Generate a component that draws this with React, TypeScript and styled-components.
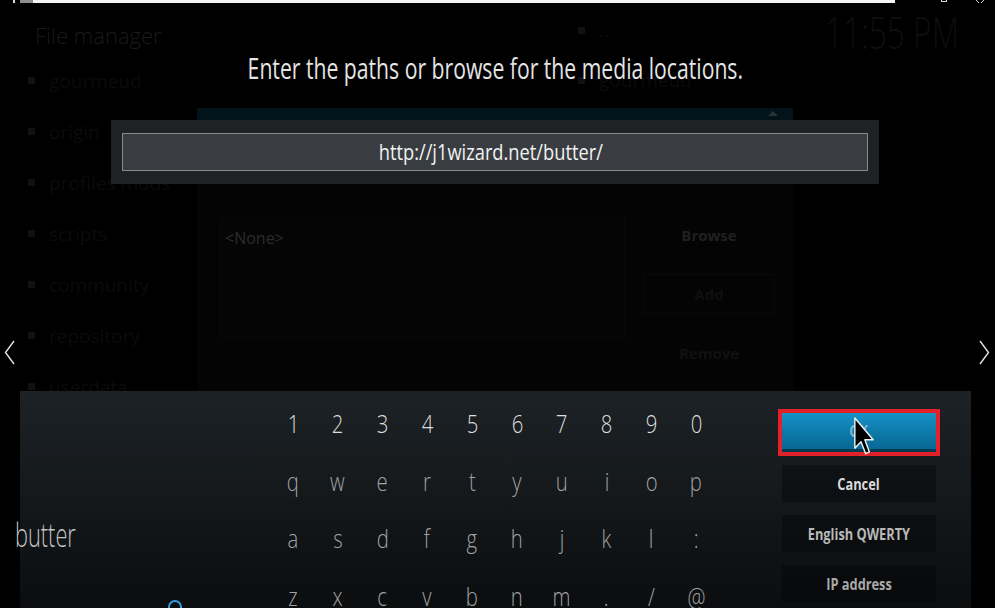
import styled, { createGlobalStyle } from "styled-components";

const GlobalStyle = createGlobalStyle`
  html, body {
    margin: 0;
    padding: 0;
    background: #000;
  }
  body {
    font-family: "Open Sans", "Noto Sans", sans-serif;
  }
  * {
    box-sizing: border-box;
  }
`;

const sideItems = ["gourmeud", "origin", "profiles mods", "scripts", "community", "repository", "userdata"];
const peerItems = ["..", "gourmeud"];

const keyRows = [
  ["1", "2", "3", "4", "5", "6", "7", "8", "9", "0"],
  ["q", "w", "e", "r", "t", "y", "u", "i", "o", "p"],
  ["a", "s", "d", "f", "g", "h", "j", "k", "l", ":"],
  ["z", "x", "c", "v", "b", "n", "m", ".", "/", "@"],
];

const App = () => {
  return (
    <>
      <GlobalStyle />
      <Screen>
        <Backdrop>
          <TopStrip>
            <Tick />
            <GreyBit />
            <WhiteBar />
            <WinMax />
            <WinClose width="8" height="3" viewBox="0 0 8 3">
              <path d="M0 0 L3 3 M8 0 L5 3" stroke="#dcdcdc" strokeWidth="1" fill="none" />
            </WinClose>
          </TopStrip>
          <WindowRow>
            <LeftCol>
              <FileTitle>File manager</FileTitle>
              <SideList>
                {sideItems.map((name) => (
                  <SideItem key={name}>
                    <Bullet />
                    <SideText>{name}</SideText>
                  </SideItem>
                ))}
              </SideList>
            </LeftCol>
            <MidCol>
              <PeerList>
                {peerItems.map((name) => (
                  <PeerItem key={name}>
                    <Bullet />
                    <SideText>{name}</SideText>
                  </PeerItem>
                ))}
              </PeerList>
              <DimDialog>
                <DialogBand>
                  <ScrollUp />
                </DialogBand>
                <DialogBody>
                  <ListBox>&lt;None&gt;</ListBox>
                  <DimButtons>
                    <DimButton $color="#202020">Browse</DimButton>
                    <DimButton $color="#0f0f0f" $framed>
                      Add
                    </DimButton>
                    <DimButton $color="#111111">Remove</DimButton>
                  </DimButtons>
                </DialogBody>
              </DimDialog>
            </MidCol>
            <RightCol>
              <Clock>11:55 PM</Clock>
            </RightCol>
          </WindowRow>
        </Backdrop>

        <Overlay>
          <Title>
            <Narrow $scale={0.73}>Enter the paths or browse for the media locations.</Narrow>
          </Title>
          <UrlPanel>
            <UrlField>
              <Narrow $scale={0.87}>http://j1wizard.net/butter/</Narrow>
            </UrlField>
          </UrlPanel>

          <Keyboard>
            <InputArea>
              <Typed>butter</Typed>
            </InputArea>
            <KeyGrid>
              {keyRows.map((row, r) =>
                row.map((k) => (
                  <Key key={`${r}-${k}`} $color={r === 0 ? "#dedede" : "#a2a2a2"}>
                    <Narrow $scale={0.78}>{k}</Narrow>
                  </Key>
                ))
              )}
            </KeyGrid>
            <ActionCol>
              <OkButton>
                <Narrow $scale={0.8}>OK</Narrow>
                <Pointer width="20" height="38" viewBox="0 0 12 20" preserveAspectRatio="none">
                  <path
                    d="M0.5 0.5 L0.5 16.5 L4.2 13 L7 19.3 L9.2 18.3 L6.5 12 L11.5 12 Z"
                    fill="#000"
                    stroke="#f2f2f2"
                    strokeWidth="1.4"
                    vectorEffect="non-scaling-stroke"
                    strokeLinejoin="round"
                  />
                </Pointer>
              </OkButton>
              <ActionButton $color="#dadada">
                <Narrow $scale={0.8}>Cancel</Narrow>
              </ActionButton>
              <ActionButton $color="#b8b8b8">
                <Narrow $scale={0.8}>English QWERTY</Narrow>
              </ActionButton>
              <ActionButton $color="#a8a8a8">
                <Narrow $scale={0.8}>IP address</Narrow>
              </ActionButton>
            </ActionCol>
            <Spinner />
          </Keyboard>
        </Overlay>

        <NavArrow $side="left" width="11" height="25" viewBox="0 0 11 25">
          <path d="M10 1 L1.5 12.5 L10 24" stroke="#e2e2e2" strokeWidth="1.4" fill="none" />
        </NavArrow>
        <NavArrow $side="right" width="11" height="25" viewBox="0 0 11 25">
          <path d="M1 1 L9.5 12.5 L1 24" stroke="#e2e2e2" strokeWidth="1.4" fill="none" />
        </NavArrow>
      </Screen>
    </>
  );
};

const Screen = styled.div`
  position: relative;
  width: 995px;
  height: 608px;
  overflow: hidden;
  background: #000;
`;

/* the file manager window sitting behind the dialog */

const Backdrop = styled.div`
  display: flex;
  flex-direction: column;
  height: 100%;
`;

const TopStrip = styled.div`
  display: flex;
  align-items: flex-start;
  height: 3px;
  flex-shrink: 0;
`;

const Tick = styled.span`
  margin-left: 13px;
  width: 2px;
  height: 3px;
  background: #d8d8d8;
`;

const GreyBit = styled.span`
  margin-left: 5px;
  width: 13px;
  height: 3px;
  background: #8e8e8e;
`;

const WhiteBar = styled.span`
  width: 862px;
  height: 3px;
  background: #f4f4f4;
`;

const WinMax = styled.span`
  margin-left: 46px;
  width: 6px;
  height: 2px;
  border: 1px solid #dcdcdc;
  border-top: none;
`;

const WinClose = styled.svg`
  margin-left: 29px;
  display: block;
`;

const WindowRow = styled.div`
  display: flex;
  flex: 1;
`;

const LeftCol = styled.div`
  width: 197px;
  padding-left: 28px;
  flex-shrink: 0;
`;

const FileTitle = styled.div`
  margin: 21px 0 0 7px;
  font-size: 22px;
  line-height: 22px;
  font-weight: 300;
  color: #1a1a1a;
  white-space: nowrap;
`;

const SideList = styled.div`
  margin-top: 9px;
  display: flex;
  flex-direction: column;
`;

const SideItem = styled.div`
  height: 51px;
  display: flex;
  align-items: center;
  gap: 14px;
`;

const PeerItem = styled(SideItem)`
  height: 50px;
`;

const Bullet = styled.span`
  width: 7px;
  height: 7px;
  background: #111111;
  flex-shrink: 0;
`;

const SideText = styled.span`
  font-size: 19px;
  color: #0b0b0b;
  white-space: nowrap;
`;

const MidCol = styled.div`
  width: 596px;
  flex-shrink: 0;
  display: flex;
  flex-direction: column;
`;

const PeerList = styled.div`
  height: 105px;
  padding: 2px 0 0 381px;
  flex-shrink: 0;
`;

const DimDialog = styled.div`
  flex: 1;
  display: flex;
  flex-direction: column;
`;

const DialogBand = styled.div`
  height: 12px;
  background: #03131a;
  display: flex;
  justify-content: flex-end;
  align-items: flex-end;
  padding: 0 15px 4px 0;
`;

const ScrollUp = styled.span`
  width: 0;
  height: 0;
  border-left: 5px solid transparent;
  border-right: 5px solid transparent;
  border-bottom: 5px solid #2a3337;
`;

const DialogBody = styled.div`
  flex: 1;
  display: flex;
  align-items: flex-start;
  padding: 97px 3px 0 23px;
  background: #040405;
`;

const ListBox = styled.div`
  width: 405px;
  height: 123px;
  padding: 8px 4px;
  font-size: 16px;
  line-height: 24px;
  color: #2c2c2c;
  background: #050505;
  border: 1px solid #080808;
`;

const DimButtons = styled.div`
  width: 162px;
  margin: -2px 0 0 3px;
  display: flex;
  flex-direction: column;
  gap: 19px;
`;

const DimButton = styled.div<{ $color: string; $framed?: boolean }>`
  height: 40px;
  display: flex;
  align-items: center;
  justify-content: center;
  font-size: 15px;
  font-weight: 700;
  color: ${(p) => p.$color};
  border: 1px solid ${(p) => (p.$framed ? "#0a0a0a" : "transparent")};
  margin: 0 ${(p) => (p.$framed ? "15px" : "0")};
`;

const RightCol = styled.div`
  flex: 1;
  padding-left: 32px;
`;

const Clock = styled.div`
  margin-top: 7px;
  font-size: 44px;
  line-height: 44px;
  font-weight: 300;
  color: #0e0e0e;
  white-space: nowrap;
  transform: scaleX(0.72);
  transform-origin: left center;
`;

/* path dialog and on-screen keyboard */

const Overlay = styled.div`
  position: absolute;
  inset: 0;
  display: flex;
  flex-direction: column;
  align-items: center;
  padding-right: 5px;
`;

const Narrow = styled.span<{ $scale: number }>`
  display: inline-block;
  white-space: nowrap;
  transform: scaleX(${(p) => p.$scale});
`;

const Title = styled.div`
  margin-top: 53px;
  font-size: 29px;
  line-height: 29px;
  color: #e4e4e4;
  text-align: center;
`;

const UrlPanel = styled.div`
  margin-top: 38px;
  width: 768px;
  height: 64px;
  padding: 13px 11px;
  background: #1e2225;
`;

const UrlField = styled.div`
  height: 100%;
  display: flex;
  align-items: center;
  justify-content: center;
  padding-right: 8px;
  background: #393d41;
  border: 1px solid #878b8f;
  font-size: 21px;
  color: #f2f2f2;
`;

const Keyboard = styled.div`
  position: relative;
  align-self: flex-start;
  margin: 207px 0 0 20px;
  width: 951px;
  height: 217px;
  padding-top: 4px;
  display: flex;
  align-items: flex-start;
  background: linear-gradient(180deg, #1d2226 0%, #14181b 50%, #0b0d0f 100%);
`;

const InputArea = styled.div`
  width: 250.6px;
  flex-shrink: 0;
`;

const Typed = styled.div`
  margin: 122.7px 0 0 -5px;
  font-size: 33px;
  line-height: 33px;
  font-weight: 300;
  color: #c4c4c4;
  transform: scaleX(0.66);
  transform-origin: left center;
`;

const KeyGrid = styled.div`
  display: grid;
  grid-template-columns: repeat(10, 44.8px);
  grid-auto-rows: 57.5px;
  flex-shrink: 0;
`;

const Key = styled.div<{ $color: string }>`
  text-align: center;
  font-size: 26px;
  line-height: 57.5px;
  font-weight: 300;
  color: ${(p) => p.$color};
`;

const ActionCol = styled.div`
  width: 154px;
  margin-left: 63.4px;
  padding-top: 18px;
  display: flex;
  flex-direction: column;
  gap: 13px;
`;

const ActionButton = styled.div<{ $color?: string }>`
  height: 37px;
  display: flex;
  align-items: center;
  justify-content: center;
  font-size: 16px;
  font-weight: 700;
  color: ${(p) => p.$color || "#ddd"};
  background: rgba(0, 0, 0, 0.32);
`;

const OkButton = styled(ActionButton)`
  position: relative;
  height: 39px;
  color: rgba(225, 235, 240, 0.55);
  background: linear-gradient(180deg, #1892c5 0%, #0c79a8 55%, #0a6894 100%);
  border-bottom: 3px solid #073a50;
  outline: 4px solid #e3212b;
  outline-offset: 0;
`;

const Pointer = styled.svg`
  position: absolute;
  left: 72px;
  top: 4px;
  display: block;
`;

const Spinner = styled.span`
  position: absolute;
  left: 148px;
  top: 209px;
  width: 14px;
  height: 14px;
  border: 2px solid #2e9fe3;
  border-radius: 50%;
`;

const NavArrow = styled.svg<{ $side: "left" | "right" }>`
  position: absolute;
  top: 340px;
  left: ${(p) => (p.$side === "left" ? "4px" : "979px")};
  display: block;
`;

export default App;
